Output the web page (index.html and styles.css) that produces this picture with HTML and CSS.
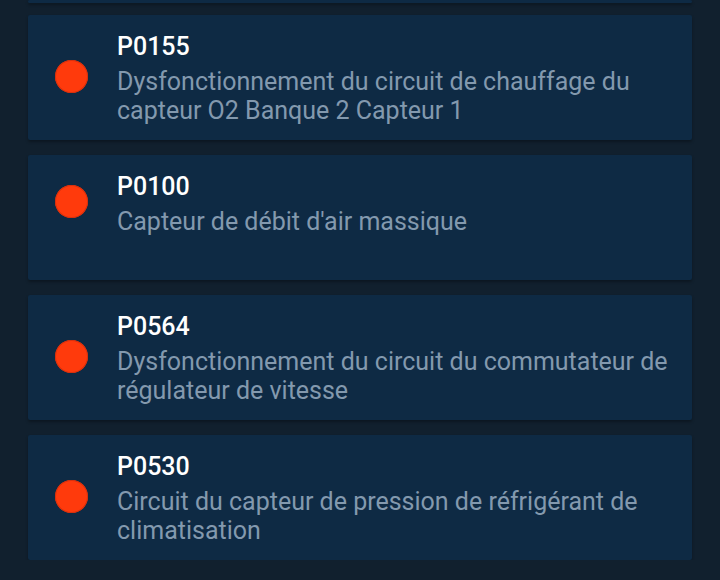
FILE: index.html
```html
<!DOCTYPE html>
<html lang="fr">
<head>
    <meta charset="UTF-8">
    <meta name="viewport" content="width=device-width, initial-scale=1.0">
    <title>Codes défaut</title>
    <link rel="stylesheet" href="styles.css">
</head>
<body>
    <div class="code-list">
        <div class="code-card code-card-cut"></div>

        <div class="code-card">
            <div class="code-row">
                <span class="status-dot"></span>
                <div class="code-text">
                    <h3>P0155</h3>
                    <p>Dysfonctionnement du circuit de chauffage du capteur O2 Banque 2 Capteur 1</p>
                </div>
            </div>
        </div>

        <div class="code-card">
            <div class="code-row">
                <span class="status-dot"></span>
                <div class="code-text">
                    <h3>P0100</h3>
                    <p>Capteur de débit d'air massique</p>
                </div>
            </div>
        </div>

        <div class="code-card">
            <div class="code-row">
                <span class="status-dot"></span>
                <div class="code-text">
                    <h3>P0564</h3>
                    <p>Dysfonctionnement du circuit du commutateur de régulateur de vitesse</p>
                </div>
            </div>
        </div>

        <div class="code-card">
            <div class="code-row">
                <span class="status-dot"></span>
                <div class="code-text">
                    <h3>P0530</h3>
                    <p>Circuit du capteur de pression de réfrigérant de climatisation</p>
                </div>
            </div>
        </div>
    </div>
</body>
</html>
```

FILE: styles.css
```css
body {
    font-family: Roboto, "Noto Sans", Arial, sans-serif;
    margin: 0;
    padding: 0;
    background-color: #11202e;
    overflow: hidden;
}

.code-list {
    display: flex;
    flex-direction: column;
    gap: 15px;
    padding: 0 28px;
}

.code-card {
    min-height: 125px;
    box-sizing: border-box;
    padding: 12px 20px 0 27px;
    background-color: #0e2a44;
    border-radius: 2px;
    box-shadow: 0 2px 3px rgba(0, 0, 0, 0.3);
}

/* the card above, scrolled almost out of view */
.code-card-cut {
    min-height: 3px;
    height: 3px;
    padding: 0;
    margin-bottom: -3px;
}

.code-row {
    display: flex;
    align-items: center;
    gap: 29px;
}

.status-dot {
    flex: none;
    width: 33px;
    height: 33px;
    border-radius: 50%;
    background-color: #ff3a0c;
    box-shadow: inset 0 0 0 1px #d8300c;
}

.code-text h3 {
    margin: 0;
    font-size: 25px;
    font-weight: 500;
    line-height: 40px;
    color: #ffffff;
}

.code-text p {
    margin: 0;
    font-size: 25px;
    line-height: 29px;
    color: #8399ae;
}
```
